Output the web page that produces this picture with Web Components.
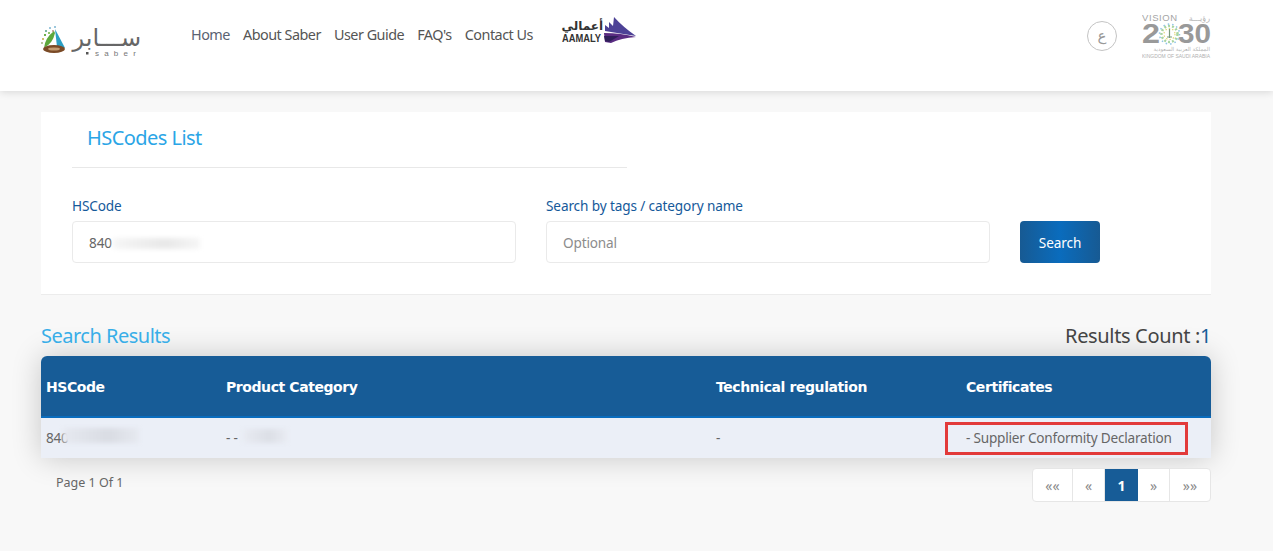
<!DOCTYPE html>
<html lang="en">
<head>
<meta charset="utf-8">
<title>HSCodes List</title>
<style>
  html, body { margin: 0; padding: 0; }
  body { background: #f8f8f8; font-family: "Noto Sans", "DejaVu Sans", sans-serif; color: #555; height: 551px; overflow: hidden; }
</style>
</head>
<body>
<saber-header></saber-header>
<saber-page>
  <hs-search-card></hs-search-card>
  <hs-results></hs-results>
</saber-page>

<script>
class SaberLogo extends HTMLElement {
  constructor() {
    super();
    this.attachShadow({ mode: 'open' });
    this.shadowRoot.innerHTML = `
      <style>
        :host { display: block; width: 102px; height: 40px; }
        svg { display: block; }
      </style>
      <svg width="102" height="40" viewBox="0 0 102 40">
        <g fill="#7fb8a0">
          <rect x="4" y="8" width="2" height="2"/><rect x="8" y="5" width="2" height="2" fill="#9cc7dc"/>
          <rect x="11" y="8" width="2" height="2" fill="#c9a9a0"/><rect x="3" y="12" width="2" height="2" fill="#6db04a"/>
          <rect x="1" y="16" width="2" height="2" fill="#d0c070"/><rect x="13" y="4" width="2" height="2" fill="#9cc7dc"/>
          <rect x="7" y="10" width="2" height="2" fill="#8fc46a"/><rect x="0" y="20" width="2" height="2" fill="#b8c8a0"/>
        </g>
        <path d="M14 7 L24 26 L16 25 Z" fill="#2b9fc4"/>
        <path d="M13 9 Q4 16 3 26 Q12 21 14 11 Z" fill="#5da83c"/>
        <ellipse cx="13" cy="27" rx="11" ry="4" fill="#7a4a26"/>
        <ellipse cx="13" cy="27" rx="6" ry="1.6" fill="#c29a70"/>
        <text x="100" y="24" font-family="DejaVu Sans" font-size="24" fill="#666" direction="rtl">ســـابر</text>
        <rect x="45" y="30" width="2.5" height="2.5" fill="#555"/>
        <text x="54" y="34" font-family="Liberation Sans" font-size="8" letter-spacing="5.2" fill="#777">saber</text>
      </svg>`;
  }
}
customElements.define('saber-logo', SaberLogo);

class AamalyLogo extends HTMLElement {
  constructor() {
    super();
    this.attachShadow({ mode: 'open' });
    this.shadowRoot.innerHTML = `
      <style>
        :host { display: block; width: 78px; height: 30px; }
        svg { display: block; }
      </style>
      <svg width="78" height="30" viewBox="0 0 78 30">
        <text x="44" y="14" font-family="DejaVu Sans" font-size="12" font-weight="bold" fill="#333" direction="rtl">أعمالي</text>
        <text x="3" y="26" font-family="Liberation Sans" font-size="10.5" font-weight="bold" textLength="39" lengthAdjust="spacingAndGlyphs" fill="#333">AAMALY</text>
        <path d="M46 9 L50 12 L50 6 L54 10 L55 1 Q64 11 77 20 L58 17 L46 15 Z" fill="#4d4296"/>
        <path d="M45 17 Q62 17 77 21 Q62 22 52 27 L46 26 Z" fill="#5a2c82"/>
        <path d="M45 20 L60 20 L50 26 L46 25 Z" fill="#2f1f5a"/>
      </svg>`;
  }
}
customElements.define('aamaly-logo', AamalyLogo);

class VisionLogo extends HTMLElement {
  constructor() {
    super();
    this.attachShadow({ mode: 'open' });
    this.shadowRoot.innerHTML = `
      <style>
        :host { display: block; width: 69px; height: 50px; }
        svg { display: block; }
      </style>
      <svg width="69" height="50" viewBox="0 0 69 50">
        <text x="0" y="9" font-family="Liberation Sans" font-size="9.5" letter-spacing=".6" fill="#a5a5a5">VISION</text>
        <text x="68" y="9" font-family="DejaVu Sans" font-size="8" fill="#b5b5b5" direction="rtl">رؤيـــة</text>
        <text x="0" y="31" font-family="Liberation Sans" font-size="27" font-weight="bold" textLength="18" lengthAdjust="spacingAndGlyphs" fill="#999">2</text>
        <text x="36" y="31" font-family="Liberation Sans" font-size="27" font-weight="bold" textLength="33" lengthAdjust="spacingAndGlyphs" fill="#999">30</text>
        <circle cx="27.5" cy="22" r="8" fill="none" stroke="#a9d4a0" stroke-width="2.5" stroke-dasharray="2 2"/>
        <circle cx="27.5" cy="22" r="10" fill="none" stroke="#8fc4e6" stroke-width="1.5" stroke-dasharray="1.5 3"/>
        <circle cx="27.5" cy="22" r="5.5" fill="none" stroke="#e3d77a" stroke-width="1.2" stroke-dasharray="1.5 2"/>
        <path d="M27.5 17v9M25 25h5" stroke="#7a9a7a" stroke-width="1.2"/>
        <text x="68" y="39" font-family="DejaVu Sans" font-size="5.5" fill="#b5b5b5" direction="rtl">المملكة العربية السعودية</text>
        <text x="0" y="46" font-family="Liberation Sans" font-size="5.6" textLength="68" lengthAdjust="spacingAndGlyphs" fill="#b0b0b0">KINGDOM OF SAUDI ARABIA</text>
      </svg>`;
  }
}
customElements.define('vision-logo', VisionLogo);

class SaberHeader extends HTMLElement {
  constructor() {
    super();
    this.attachShadow({ mode: 'open' });
    this.shadowRoot.innerHTML = `
      <style>
        :host {
          display: block;
          height: 91px;
          background: #fff;
          box-shadow: 0 1px 8px rgba(0,0,0,.14);
          position: relative;
        }
        .bar { display: flex; align-items: flex-start; padding: 0 62px 0 41px; }
        saber-logo { margin-top: 22px; }
        nav { display: flex; gap: 13px; margin: 25px 0 0 48px; font-size: 14.4px; line-height: 20px; letter-spacing: -.5px; color: #555; }
        nav a:first-child { color: #5a6272; }
        aamaly-logo { margin: 16px 0 0 26px; }
        .lang {
          margin: 21px 25px 0 auto;
          width: 28px; height: 28px;
          border: 1px solid #c4c4c4; border-radius: 50%;
          display: flex; align-items: center; justify-content: center;
          font: 15px "DejaVu Sans", sans-serif; color: #999;
        }
        vision-logo { margin-top: 12px; }
      </style>
      <div class="bar">
        <saber-logo></saber-logo>
        <nav><a>Home</a><a>About Saber</a><a>User Guide</a><a>FAQ's</a><a>Contact Us</a></nav>
        <aamaly-logo></aamaly-logo>
        <div class="lang">ع</div>
        <vision-logo></vision-logo>
      </div>`;
  }
}
customElements.define('saber-header', SaberHeader);

class SaberPage extends HTMLElement {
  constructor() {
    super();
    this.attachShadow({ mode: 'open' });
    this.shadowRoot.innerHTML = `
      <style>
        :host { display: block; padding: 21px 62px 0 41px; }
      </style>
      <slot></slot>`;
  }
}
customElements.define('saber-page', SaberPage);

class HsField extends HTMLElement {
  constructor() {
    super();
    this.attachShadow({ mode: 'open' });
    this.shadowRoot.innerHTML = `
      <style>
        :host { display: block; width: 444px; }
        label { display: block; font-size: 13.6px; line-height: 18px; color: #15599a; letter-spacing: -.12px; margin-bottom: 6px; }
        .box {
          box-sizing: border-box; height: 42px; padding: 0 16px;
          background: #fff; border: 1px solid #eaeaea; border-radius: 4px;
          display: flex; align-items: center;
          font-size: 13.6px; color: #666; letter-spacing: -.15px;
          position: relative;
        }
        .box.ph { color: #8c8c8c; }
      </style>
      <label></label>
      <div class="box"><slot></slot></div>`;
  }
  connectedCallback() {
    this.shadowRoot.querySelector('label').textContent = this.getAttribute('label');
    if (this.hasAttribute('placeholder')) this.shadowRoot.querySelector('.box').classList.add('ph');
  }
}
customElements.define('hs-field', HsField);

// blurred out part of a value, as in the original capture
class HsSmudge extends HTMLElement {
  constructor() {
    super();
    this.attachShadow({ mode: 'open' });
    this.shadowRoot.innerHTML = `
      <style>
        :host {
          display: block; position: absolute;
          left: var(--x); top: var(--y); width: var(--w); height: var(--h);
          background: linear-gradient(90deg, var(--l, #f6f6f6), var(--c, #e8e8e8) 60%, var(--l, #f6f6f6));
          filter: blur(2px);
        }
      </style>`;
  }
}
customElements.define('hs-smudge', HsSmudge);

class HsSearchCard extends HTMLElement {
  constructor() {
    super();
    this.attachShadow({ mode: 'open' });
    this.shadowRoot.innerHTML = `
      <style>
        :host {
          display: block; box-sizing: border-box; height: 183px;
          background: #fff; border-bottom: 1px solid #ececec;
          padding: 0 31px;
        }
        .head { width: 555px; height: 55px; border-bottom: 1px solid #e8e8e8; }
        h2 { margin: 0; padding: 12px 0 0 15px; font-size: 20px; line-height: 28px; font-weight: 400; color: #2aa5e6; letter-spacing: -.55px; }
        .row { display: flex; align-items: flex-end; gap: 30px; margin-top: 29px; }
        button {
          width: 80px; height: 42px; border: 0; border-radius: 4px;
          background: linear-gradient(90deg, #175a93, #0a6cbd 50%, #175a93);
          color: #fff; font: 13.6px "Noto Sans", sans-serif; letter-spacing: -.1px;
        }
        .val { position: relative; }
        hs-smudge { --x: 24px; --y: 5px; --w: 87px; --h: 11px; }
      </style>
      <div class="head"><h2>HSCodes List</h2></div>
      <div class="row">
        <hs-field label="HSCode"><span class="val">840<hs-smudge></hs-smudge></span></hs-field>
        <hs-field label="Search by tags / category name" placeholder>Optional</hs-field>
        <button>Search</button>
      </div>`;
  }
}
customElements.define('hs-search-card', HsSearchCard);

class HsPager extends HTMLElement {
  constructor() {
    super();
    this.attachShadow({ mode: 'open' });
    this.shadowRoot.innerHTML = `
      <style>
        :host {
          display: flex; height: 34px; box-sizing: border-box;
          background: #fff; border: 1px solid #e6e6e6; border-radius: 4px;
          font-size: 14px; color: #8a8a8a; overflow: hidden;
        }
        span { box-sizing: border-box; display: flex; align-items: center; justify-content: center; height: 100%; border-right: 1px solid #e6e6e6; }
        span:last-child { border-right: 0; }
        .on { background: #175c97; color: #fff; font-weight: 700; border-right: 0; }
      </style>
      <span style="width:40px">««</span>
      <span style="width:32px">«</span>
      <span class="on" style="width:33px">1</span>
      <span style="width:32px">»</span>
      <span style="width:40px">»»</span>`;
  }
}
customElements.define('hs-pager', HsPager);

class HsResults extends HTMLElement {
  constructor() {
    super();
    this.attachShadow({ mode: 'open' });
    this.shadowRoot.innerHTML = `
      <style>
        :host { display: block; padding-top: 26px; }
        .top { display: flex; justify-content: space-between; align-items: center; height: 28px; margin-bottom: 7px; }
        h3 { margin: 0; font-size: 20px; font-weight: 400; color: #38aee8; letter-spacing: -.5px; }
        .count { font-size: 20px; color: #444; letter-spacing: -.35px; }
        .count b { font-weight: 400; color: #175c97; }
        .table { box-shadow: 0 0 30px rgba(0,0,0,.2); border-radius: 6px 6px 0 0; }
        .tr { display: grid; grid-template-columns: 180px 490px 250px 250px; align-items: center; }
        .thead {
          height: 60px; background: #175c97; border-bottom: 2px solid #0a6cbd;
          border-radius: 6px 6px 0 0;
          color: #fff; font: 700 14px "DejaVu Sans", "Noto Sans", sans-serif; letter-spacing: -.42px;
        }
        .thead > div { top: 1px; }
        .tbody { height: 40px; background: #ebeff7; font-size: 13.6px; color: #666; letter-spacing: -.22px; }
        .tr > div { padding-left: 5px; position: relative; }
        .tbody > div { top: -1px; }
        .cert { position: relative; }
        .mark {
          position: absolute; left: -21px; top: -6px; width: 243px; height: 33px;
          box-sizing: border-box; border: 3px solid #e23a3a;
        }
        .foot { display: flex; justify-content: space-between; align-items: flex-start; margin-top: 10px; }
        .page { font-size: 12.5px; color: #666; padding: 6px 0 0 15px; }
        .s1 { --x: 22px; --y: 0px; --w: 76px; --h: 15px; --c: #d9dce3; --l: #e6e9f0; }
        .s2 { --x: 22px; --y: 1px; --w: 44px; --h: 14px; --c: #dcdfe6; --l: #e8ebf2; }
      </style>
      <div class="top"><h3>Search Results</h3><div class="count">Results Count :<b>1</b></div></div>
      <div class="table">
        <div class="tr thead"><div>HSCode</div><div>Product Category</div><div>Technical regulation</div><div>Certificates</div></div>
        <div class="tr tbody">
          <div>840<hs-smudge class="s1"></hs-smudge></div>
          <div>- -<hs-smudge class="s2"></hs-smudge></div>
          <div>-</div>
          <div><span class="cert">- Supplier Conformity Declaration<span class="mark"></span></span></div>
        </div>
      </div>
      <div class="foot"><div class="page">Page 1 Of 1</div><hs-pager></hs-pager></div>`;
  }
}
customElements.define('hs-results', HsResults);
</script>
</body>
</html>
